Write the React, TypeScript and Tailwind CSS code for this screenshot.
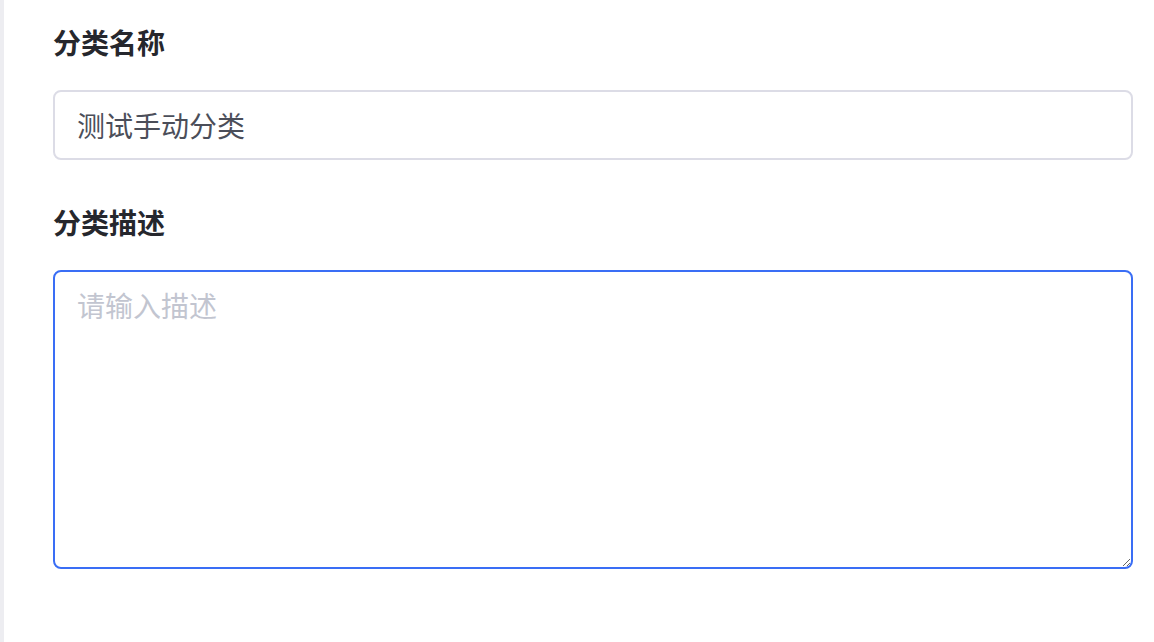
import React from 'react';

// ============================================
// Category form
// ============================================

const font = 'font-["Noto_Sans_CJK_SC","Noto_Sans",sans-serif]';

export default function App() {
  return (
    <div className={`flex h-[642px] w-full bg-white ${font}`}>
      {/* left edge */}
      <div className="w-[4px] shrink-0 bg-[#ededf1]" />

      <div className="flex flex-1 flex-col pl-[49px] pr-[21px] pt-[22px]">
        {/* Name */}
        <label className="text-[28px] leading-[40px] font-bold text-[#26272d]">分类名称</label>
        <input
          defaultValue="测试手动分类"
          className="mt-[28px] h-[70px] w-full rounded-[8px] border-2 border-[#dcdce6] px-[22px] text-[28px] text-[#4b4e59] outline-none"
        />

        {/* Description */}
        <label className="mt-[42px] text-[28px] leading-[40px] font-bold text-[#26272d]">分类描述</label>
        <textarea
          placeholder="请输入描述"
          className="mt-[28px] h-[299px] w-full rounded-[8px] border-2 border-[#3a6ef5] px-[22px] py-[13px] text-[28px] leading-[40px] text-[#4b4e59] outline-none placeholder:text-[#c2c5d0]"
        />
      </div>
    </div>
  );
}
